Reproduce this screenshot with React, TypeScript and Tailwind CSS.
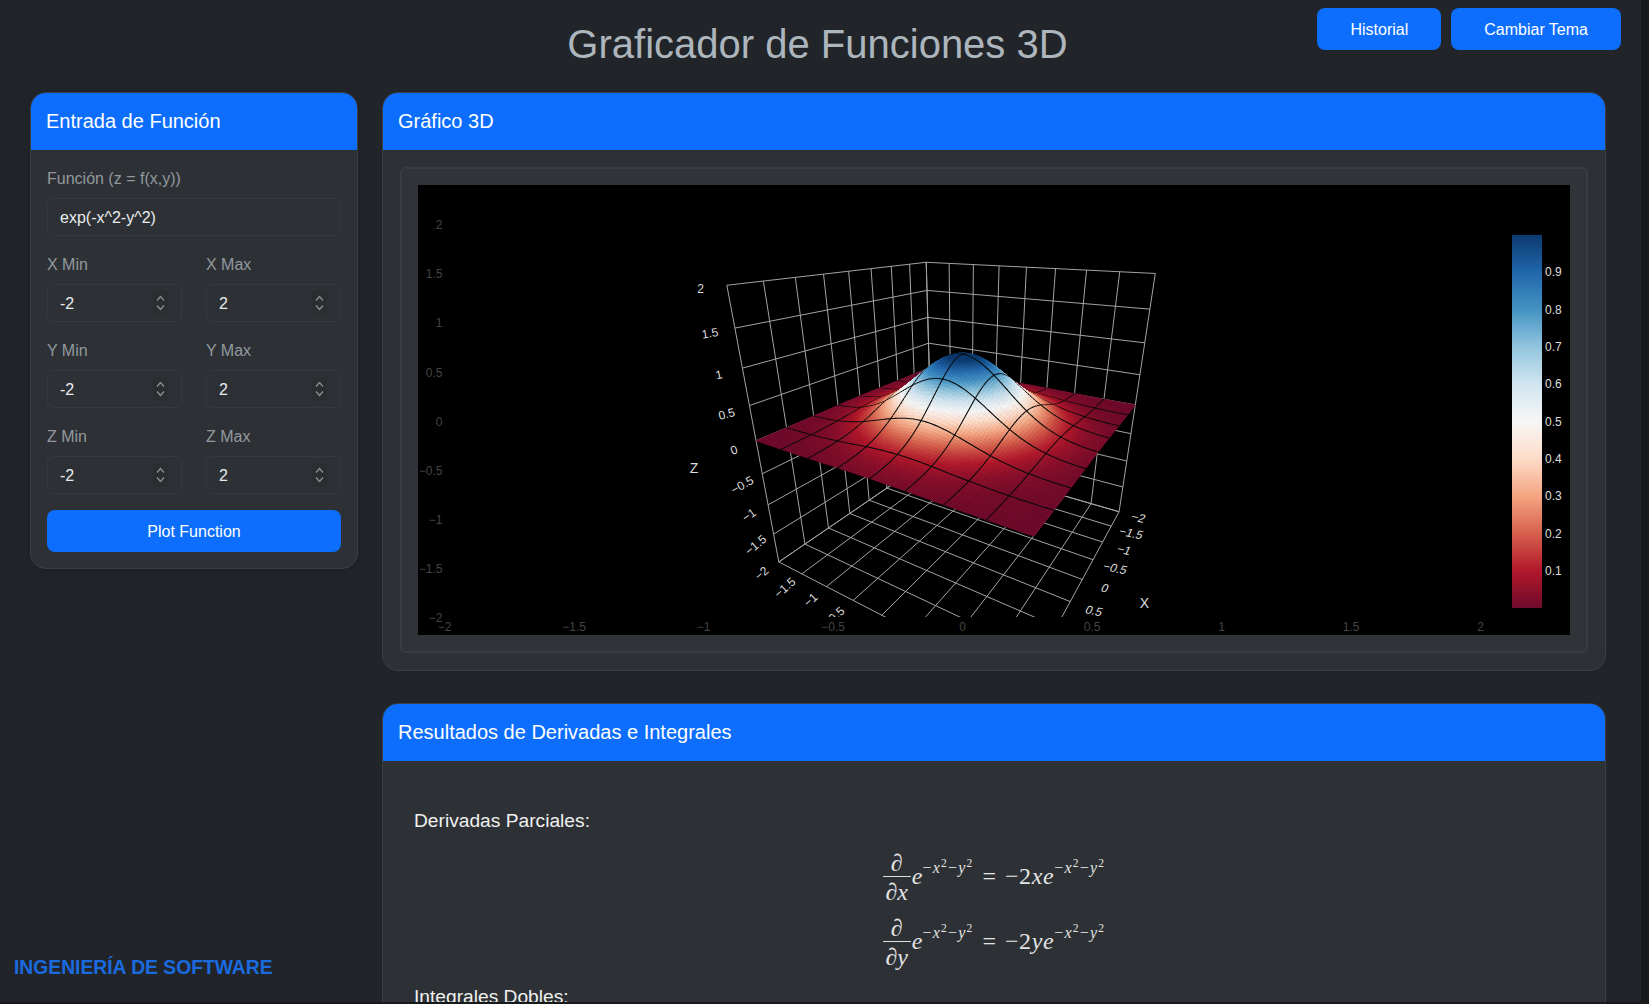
import React from 'react';

// Fit a pinhole projection on points read from the plot, so the 3D scene lands where it should
const fitPoints: number[][] = [
  [-2, -2, 2, 925.7, 262.3],
  [2, -2, 2, 726.7, 285],
  [-2, 2, 2, 1155.3, 273.3],
  [2, -2, -2, 778.3, 561.7],
  [-2, 2, -2, 1119.3, 511.7],
  [2, -2, 0, 756.7, 441],
  [-2, 2, 0, 1135, 405],
  [2, 2, 0, 1033.3, 536.7],
  [-2, -2, 0.5, 928.7, 343.3],
  [0, 0, 1, 963.3, 354.3],
];

function solve(A: number[][], b: number[]) {
  const n = b.length;
  const m = A.map((row, i) => [...row, b[i]]);
  for (let c = 0; c < n; c++) {
    let best = c;
    for (let r = c + 1; r < n; r++) if (Math.abs(m[r][c]) > Math.abs(m[best][c])) best = r;
    [m[c], m[best]] = [m[best], m[c]];
    for (let r = 0; r < n; r++) {
      if (r === c) continue;
      const f = m[r][c] / m[c][c];
      for (let k = c; k <= n; k++) m[r][k] -= f * m[c][k];
    }
  }
  return m.map((row, i) => row[n] / row[i]);
}

function fitCamera() {
  const rows: number[][] = [];
  const rhs: number[] = [];
  fitPoints.forEach(([X, Y, Z, px, py]) => {
    const u = (px - 940) / 200;
    const v = (py - 400) / 200;
    rows.push([X, Y, Z, 1, 0, 0, 0, 0, -u * X, -u * Y, -u * Z]);
    rhs.push(u);
    rows.push([0, 0, 0, 0, X, Y, Z, 1, -v * X, -v * Y, -v * Z]);
    rhs.push(v);
  });
  const ata = Array.from({ length: 11 }, (_, i) =>
    Array.from({ length: 11 }, (_, j) => rows.reduce((s, r) => s + r[i] * r[j], 0)),
  );
  const atb = Array.from({ length: 11 }, (_, i) => rows.reduce((s, r, k) => s + r[i] * rhs[k], 0));
  return solve(ata, atb);
}

const cam = fitCamera();

function project(x: number, y: number, z: number): [number, number] {
  const w = cam[8] * x + cam[9] * y + cam[10] * z + 1;
  const u = (cam[0] * x + cam[1] * y + cam[2] * z + cam[3]) / w;
  const v = (cam[4] * x + cam[5] * y + cam[6] * z + cam[7]) / w;
  return [u * 200 + 940, v * 200 + 400];
}

const pt = (x: number, y: number, z: number) => project(x, y, z).map((n) => n.toFixed(1)).join(',');

const rdbu = ['#6f0a2b', '#b2182b', '#d6604d', '#f4a582', '#fddbc7', '#f7f7f7', '#d1e5f0', '#92c5de', '#4393c3', '#2166ac', '#0b3a6e'];

function hexToRgb(hex: string) {
  return [1, 3, 5].map((i) => parseInt(hex.slice(i, i + 2), 16));
}

function colorAt(t: number) {
  const p = Math.min(Math.max(t, 0), 1) * (rdbu.length - 1);
  const i = Math.min(Math.floor(p), rdbu.length - 2);
  const a = hexToRgb(rdbu[i]);
  const b = hexToRgb(rdbu[i + 1]);
  const c = a.map((v, k) => Math.round(v + (b[k] - v) * (p - i)));
  return `rgb(${c[0]},${c[1]},${c[2]})`;
}

const f = (x: number, y: number) => Math.exp(-x * x - y * y);
const N = 96;
const step = 4 / N;
const ticks = [-2, -1.5, -1, -0.5, 0, 0.5, 1, 1.5, 2];

function Surface() {
  const cells: { sum: number; el: React.ReactNode }[] = [];
  for (let i = 0; i < N; i++) {
    for (let j = 0; j < N; j++) {
      const x0 = -2 + i * step;
      const y0 = -2 + j * step;
      const x1 = x0 + step;
      const y1 = y0 + step;
      const color = colorAt(f(x0 + step / 2, y0 + step / 2) * 1.04);
      const a = project(x0, y0, f(x0, y0));
      const b = project(x0, y1, f(x0, y1));
      const c = project(x1, y0, f(x1, y0));
      cells.push({
        sum: i + j,
        el: (
          <g key={`${i}-${j}`}>
            <polygon
              points={`${pt(x0, y0, f(x0, y0))} ${pt(x1, y0, f(x1, y0))} ${pt(x1, y1, f(x1, y1))} ${pt(x0, y1, f(x0, y1))}`}
              fill={color}
              stroke={color}
              strokeWidth={0.7}
            />
            {i > 0 && i % 12 === 0 && (
              <line x1={a[0]} y1={a[1]} x2={b[0]} y2={b[1]} stroke="#0a0a0a" strokeWidth={1.1} strokeLinecap="round" />
            )}
            {j > 0 && j % 12 === 0 && (
              <line x1={a[0]} y1={a[1]} x2={c[0]} y2={c[1]} stroke="#0a0a0a" strokeWidth={1.1} strokeLinecap="round" />
            )}
          </g>
        ),
      });
    }
  }
  cells.sort((a, b) => a.sum - b.sum);
  return <g>{cells.map((c) => c.el)}</g>;
}

function Walls() {
  const lines: [number, number, number, number, number, number][] = [];
  ticks.forEach((t) => {
    // x = -2 wall
    lines.push([-2, t, -2, -2, t, 2]);
    lines.push([-2, -2, t, -2, 2, t]);
    // y = -2 wall
    lines.push([t, -2, -2, t, -2, 2]);
    lines.push([-2, -2, t, 2, -2, t]);
    // floor
    lines.push([t, -2, -2, t, 2, -2]);
    lines.push([-2, t, -2, 2, t, -2]);
  });
  return (
    <g stroke="#a3a3a3" strokeWidth={1}>
      {lines.map((l, i) => {
        const a = project(l[0], l[1], l[2]);
        const b = project(l[3], l[4], l[5]);
        return <line key={i} x1={a[0]} y1={a[1]} x2={b[0]} y2={b[1]} />;
      })}
    </g>
  );
}

const sceneLabels = [
  { t: '2', x: 700.7, y: 289, r: 0 },
  { t: '1.5', x: 710, y: 333.3, r: -10 },
  { t: '1', x: 719, y: 375, r: -12 },
  { t: '0.5', x: 726.7, y: 414, r: -15 },
  { t: '0', x: 734, y: 450, r: -20 },
  { t: '−0.5', x: 742.3, y: 485, r: -30 },
  { t: '−1', x: 749, y: 515, r: -35 },
  { t: '−1.5', x: 755.7, y: 545, r: -40 },
  { t: '−2', x: 761.7, y: 573.3, r: -42 },
  { t: '−1.5', x: 785, y: 587.7, r: -42 },
  { t: '−1', x: 810.7, y: 600, r: -42 },
  { t: '−0.5', x: 834, y: 617, r: -42 },
  { t: '−2', x: 1138.3, y: 517.7, r: 12, s: -12 },
  { t: '−1.5', x: 1131, y: 533.3, r: 12, s: -12 },
  { t: '−1', x: 1124, y: 550, r: 12, s: -12 },
  { t: '−0.5', x: 1115, y: 568.3, r: 12, s: -12 },
  { t: '0', x: 1105, y: 588.3, r: 12, s: -12 },
  { t: '0.5', x: 1094, y: 611, r: 12, s: -12 },
];

const yTicks = [
  { t: '2', y: 224.5 },
  { t: '1.5', y: 273.9 },
  { t: '1', y: 322.9 },
  { t: '0.5', y: 372.8 },
  { t: '0', y: 421.7 },
  { t: '−0.5', y: 470.5 },
  { t: '−1', y: 519.5 },
  { t: '−1.5', y: 569 },
  { t: '−2', y: 617.7 },
];

const xTicks = ['−2', '−1.5', '−1', '−0.5', '0', '0.5', '1', '1.5', '2'];

const barLabels = [
  { t: '0.9', y: 271.7 },
  { t: '0.8', y: 310 },
  { t: '0.7', y: 346.6 },
  { t: '0.6', y: 384 },
  { t: '0.5', y: 421.7 },
  { t: '0.4', y: 458.7 },
  { t: '0.3', y: 495.7 },
  { t: '0.2', y: 533.7 },
  { t: '0.1', y: 570.7 },
];

function Plot() {
  return (
    <svg viewBox="418 185 1152 450" className="block w-full h-full" fontFamily="'Liberation Sans', Arial, sans-serif">
      <defs>
        <clipPath id="scene-clip">
          <rect x="418" y="185" width="1152" height="432" />
        </clipPath>
        <linearGradient id="bar-grad" x1="0" y1="1" x2="0" y2="0">
          {rdbu.map((c, i) => (
            <stop key={c} offset={i / (rdbu.length - 1)} stopColor={c} />
          ))}
        </linearGradient>
      </defs>

      {yTicks.map((l) => (
        <text key={l.y} x={442.5} y={l.y} textAnchor="end" dominantBaseline="central" fontSize={12} fill="#444">
          {l.t}
        </text>
      ))}
      {xTicks.map((t, i) => (
        <text key={i} x={444.6 + i * 129.5} y={627} textAnchor="middle" dominantBaseline="central" fontSize={12} fill="#444">
          {t}
        </text>
      ))}

      <g clipPath="url(#scene-clip)">
        <Walls />
        <Surface />
        {sceneLabels.map((l, i) => (
          <text
            key={i}
            transform={`translate(${l.x} ${l.y}) rotate(${l.r}) skewX(${l.s ?? 0})`}
            textAnchor="middle"
            dominantBaseline="central"
            fontSize={12}
            fill="#ddd"
          >
            {l.t}
          </text>
        ))}
      </g>
      <text x={694} y={467.7} textAnchor="middle" dominantBaseline="central" fontSize={14} fill="#ddd">Z</text>
      <text x={1144.3} y={602.7} textAnchor="middle" dominantBaseline="central" fontSize={14} fill="#ddd">X</text>

      <rect x="1512" y="235" width="30" height="373" fill="url(#bar-grad)" />
      {barLabels.map((l) => (
        <text key={l.t} x={1545} y={l.y} dominantBaseline="central" fontSize={12} fill="#ddd">
          {l.t}
        </text>
      ))}
    </svg>
  );
}

function NumberField({ label, value }: { label: string; value: number }) {
  return (
    <div>
      <label className="block text-[#92989e] pt-px mb-[7px] leading-6">{label}</label>
      <div className="relative">
        <input
          type="number"
          defaultValue={value}
          className="block w-full h-[38px] pl-3 pr-3 pt-[2px] rounded-md border border-[#35393e] bg-[#2d3135] text-[#e9ecef] outline-none [appearance:textfield] [&::-webkit-inner-spin-button]:appearance-none"
        />
        {/* spinner */}
        <span className="absolute right-[14px] top-[7px] w-[15px] h-[24px] flex items-center justify-center bg-[#2b2d31]">
          <svg width="9" height="16" viewBox="0 0 9 16" fill="none" stroke="#8d9094" strokeWidth="1.2">
            <path d="M1 5.5 4.5 1.5 8 5.5" />
            <path d="M1 10.5 4.5 14.5 8 10.5" />
          </svg>
        </span>
      </div>
    </div>
  );
}

function Card({ title, className, children }: { title: string; className?: string; children: React.ReactNode }) {
  return (
    <div className={`rounded-2xl border border-[#3a3f44] bg-[#2d3135] overflow-hidden ${className ?? ''}`}>
      <div className="h-[57px] flex items-center px-[15px] pb-px bg-[#0d6efd] text-white text-xl">{title}</div>
      {children}
    </div>
  );
}

function Exponent() {
  return (
    <span className="text-[16px] tracking-[1.2px] align-[11px] leading-none">
      −<i>x</i>
      <span className="text-[11.5px] align-[6px] leading-none">2</span>−<i>y</i>
      <span className="text-[11.5px] align-[6px] leading-none">2</span>
    </span>
  );
}

function Equation({ v }: { v: string }) {
  return (
    <div className="flex items-center justify-center text-[#e4e4e4] text-[24px] leading-none h-[57px] font-['Liberation_Serif',serif]">
      <div className="flex flex-col items-center w-[28px] mr-[1px]">
        <span className="h-[29px] w-full text-center leading-[30px] border-b border-[#ddd]">∂</span>
        <span className="leading-[30px]">
          ∂<i>{v}</i>
        </span>
      </div>
      <span className="whitespace-nowrap mb-[10px]">
        <i>e</i>
        <Exponent />
        <span className="mx-[9px]">=</span>
        <span className="tracking-[0.6px]">
          −2<i>{v}e</i>
        </span>
        <Exponent />
      </span>
    </div>
  );
}

export default function App() {
  return (
    <div className="h-screen w-full overflow-hidden flex flex-col bg-[#212529] font-['Liberation_Sans',Arial,sans-serif] text-base">
      <div className="flex-1 min-h-0 flex">
        <div className="flex-1 min-w-0 flex flex-col">
          <header className="h-[92px] shrink-0 grid grid-cols-[1fr_auto_1fr] items-start">
            <div />
            <h1 className="mt-5 pr-[6px] text-[40px] leading-[48px] text-[#adb5bd] whitespace-nowrap">Graficador de Funciones 3D</h1>
            <div className="flex justify-end gap-[10px] pt-2 pr-5">
              <button className="h-[42px] px-[33px] pt-px rounded-lg bg-[#0d6efd] text-white">Historial</button>
              <button className="h-[42px] px-[33px] pt-px rounded-lg bg-[#0d6efd] text-white">Cambiar Tema</button>
            </div>
          </header>

          <div className="flex-1 min-h-0 flex gap-[24px]">
            <aside className="w-[358px] shrink-0 flex flex-col">
              <Card title="Entrada de Función" className="ml-[30px] shadow-[0_2px_8px_rgba(0,0,0,0.12)]">
                <div className="p-4 flex flex-col gap-4">
                  <div>
                    <label className="block text-[#92989e] pt-px mb-[7px] leading-6">Función (z = f(x,y))</label>
                    <input
                      type="text"
                      defaultValue="exp(-x^2-y^2)"
                      className="block w-full h-[38px] px-3 pt-[2px] rounded-md border border-[#35393e] bg-[#2d3135] text-[#e9ecef] outline-none"
                    />
                  </div>
                  <div className="grid grid-cols-2 gap-x-6 gap-y-4">
                    <NumberField label="X Min" value={-2} />
                    <NumberField label="X Max" value={2} />
                    <NumberField label="Y Min" value={-2} />
                    <NumberField label="Y Max" value={2} />
                    <NumberField label="Z Min" value={-2} />
                    <NumberField label="Z Max" value={2} />
                  </div>
                  <button className="h-[42px] pt-px rounded-lg bg-[#0d6efd] text-white">Plot Function</button>
                </div>
              </Card>
              <div className="mt-auto mb-[22px] ml-[14px] text-[19.3px] leading-6 font-bold text-[#1a6be0] whitespace-nowrap">
                INGENIERÍA DE SOFTWARE
              </div>
            </aside>

            <main className="flex-1 min-w-0 mr-[35px] overflow-hidden">
              <Card title="Gráfico 3D">
                <div className="pt-[17px] px-[17px] pb-[17px]">
                  <div className="rounded-md border-2 border-[#393d41] bg-[#303438] p-4">
                    <div className="h-[450px] bg-black">
                      <Plot />
                    </div>
                  </div>
                </div>
              </Card>

              <Card title="Resultados de Derivadas e Integrales" className="mt-[32px]">
                <div className="pt-12 px-[31px] pb-10 text-[#f0f0f0]">
                  <p className="text-[19.2px] leading-6">Derivadas Parciales:</p>
                  <div className="mt-4 flex flex-col gap-2">
                    <Equation v="x" />
                    <Equation v="y" />
                  </div>
                  <p className="mt-[14px] text-[19.2px] leading-6">Integrales Dobles:</p>
                </div>
              </Card>
            </main>
          </div>
        </div>
        {/* page scrollbar */}
        <div className="w-2 shrink-0 bg-[#17191b]" />
      </div>
      <div className="h-[2px] shrink-0 bg-[#17191b]" />
    </div>
  );
}
